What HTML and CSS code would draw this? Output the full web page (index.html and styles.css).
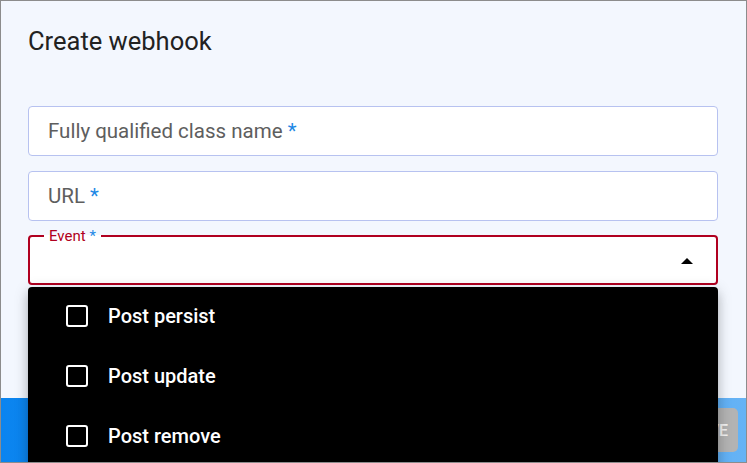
FILE: index.html
```html
<!DOCTYPE html>
<html lang="en">
<head>
<meta charset="utf-8">
<title>Create webhook</title>
<link rel="stylesheet" href="styles.css">
</head>
<body>
<div class="frame">
  <h1 class="title">Create webhook</h1>
  <div class="form">
    <div class="input"><span class="placeholder">Fully qualified class name <span class="req">*</span></span></div>
    <div class="input input-second"><span class="placeholder">URL <span class="req">*</span></span></div>
    <fieldset class="select">
      <legend class="select-label">Event <span class="req">*</span></legend>
      <div class="select-body"><span class="arrow"></span></div>
    </fieldset>
  </div>
  <div class="footer">
    <button class="btn" type="button">SAVE</button>
  </div>
  <ul class="menu">
    <li class="menu-item"><span class="checkbox"></span><span class="item-text">Post persist</span></li>
    <li class="menu-item"><span class="checkbox"></span><span class="item-text">Post update</span></li>
    <li class="menu-item"><span class="checkbox"></span><span class="item-text">Post remove</span></li>
  </ul>
</div>
</body>
</html>
```
FILE: styles.css
```css
* { box-sizing: border-box; }
html, body { margin: 0; padding: 0; }
body { font-family: Roboto, "Noto Sans", sans-serif; }

.frame {
  position: relative;
  width: 747px;
  height: 463px;
  border: 1px solid #8c8c8c;
  background: #f3f7fe;
  overflow: hidden;
  display: flex;
  flex-direction: column;
}

.title {
  margin: 26px 0 0 27px;
  font-size: 25.5px;
  line-height: 28px;
  font-weight: 400;
  color: #222;
}

.form {
  display: flex;
  flex-direction: column;
  padding: 0 28px 0 27px;
  margin-top: 51px;
}

.input {
  height: 50px;
  border: 1px solid #b7c2f0;
  border-radius: 4px;
  background: #fff;
  display: flex;
  align-items: center;
  padding-left: 19px;
}
.input-second { margin-top: 15px; }

.placeholder {
  font-size: 20.5px;
  color: #5e5e5e;
}
.req { color: #1e88e5; }

.select {
  margin: 7px 0 0 0;
  padding: 0 23px 0 14px;
  border: 2px solid #b00020;
  border-radius: 4px;
  background: #fff;
  min-width: 0;
}
.select-label {
  padding: 0 5px;
  font-size: 15px;
  line-height: 16px;
  color: #b00020;
}
.select-body {
  height: 39px;
  display: flex;
  align-items: center;
  justify-content: flex-end;
}
.arrow {
  width: 0;
  height: 0;
  border-left: 6px solid transparent;
  border-right: 6px solid transparent;
  border-bottom: 6px solid #000;
  margin-bottom: 6px;
}

.footer {
  margin-top: auto;
  height: 64px;
  background: linear-gradient(90deg, #0a84ef 0%, #2f97f2 50%, #66b3f5 100%);
  display: flex;
  justify-content: flex-end;
  align-items: flex-start;
  padding: 10px 8px 0 0;
}
.btn {
  height: 44px;
  border: none;
  border-radius: 5px;
  background: #b3b3b3;
  color: #f2f2f2;
  font-family: Roboto, sans-serif;
  font-size: 16px;
  font-weight: 500;
  padding: 0 10px 0 16px;
}

.menu {
  position: absolute;
  left: 27px;
  top: 286px;
  width: 690px;
  height: 200px;
  margin: 0;
  padding: 0;
  list-style: none;
  background: #000;
  border-radius: 4px 4px 0 0;
  box-shadow: 0 5px 5px -3px rgba(0,0,0,.2), 0 8px 10px 1px rgba(0,0,0,.14), 0 3px 14px 2px rgba(0,0,0,.12);
}
.menu-item {
  height: 60px;
  display: flex;
  align-items: center;
  padding: 0 0 2px 38px;
  gap: 20px;
}
.checkbox {
  width: 22px;
  height: 22px;
  border: 2.5px solid #fff;
  border-radius: 3px;
  flex: none;
}
.item-text {
  color: #fff;
  font-size: 20px;
  font-weight: 500;
}
```
